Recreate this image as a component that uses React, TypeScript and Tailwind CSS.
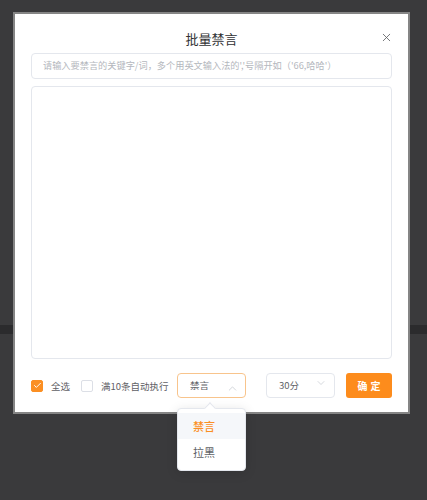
import { Check, ChevronDown, ChevronUp, X } from 'lucide-react';

const font = { fontFamily: '"Noto Sans CJK SC", "Noto Sans", sans-serif' };

function CheckBox({ checked, label }: { checked?: boolean; label: string }) {
  return (
    <label className="flex items-center gap-[8px] whitespace-nowrap text-[9.5px] leading-[14px] text-[#5f6166]">
      <span
        className={`flex size-[12px] shrink-0 items-center justify-center rounded-[2px] border ${
          checked ? 'border-[#fb8f23] bg-[#fb8f23]' : 'border-[#dcdfe6] bg-white'
        }`}
      >
        {checked && <Check className="size-[9px] text-white" strokeWidth={2.5} />}
      </span>
      {label}
    </label>
  );
}

export default function App() {
  return (
    <div className="relative h-[500px] w-[427px] overflow-hidden bg-[#3a3a3c]" style={font}>
      {/* page behind the mask */}
      <div className="h-[325px]" />
      <div className="h-[9px] bg-[#2b2b2d]" />

      {/* dialog */}
      <div className="absolute left-[13px] top-[12px] h-[402px] w-[397px] border-2 border-[#858585] bg-white px-[16px]">
        <div className="relative flex justify-center pt-[16px] pb-[5px]">
          <span className="text-[13px] leading-[18px] text-[#303133]">批量禁言</span>
          <button type="button" className="absolute right-[-1px] top-[17px] text-[#5a5c60]">
            <X className="size-[13px]" strokeWidth={1.5} />
          </button>
        </div>

        <div className="flex h-[26px] items-center whitespace-nowrap rounded-[4px] border border-[#e4e7ed] pl-[11px] text-[9.2px] text-[#b4b7bd]">
          请输入要禁言的关键字/词，多个用英文输入法的','号隔开如（'66,哈哈'）
        </div>

        <div className="mt-[7px] h-[273px] rounded-[4px] border border-[#e4e7ed]" />

        <div className="mt-[14px] flex items-center">
          <div className="w-[50px] shrink-0">
            <CheckBox checked label="全选" />
          </div>
          <div className="w-[96px] shrink-0">
            <CheckBox label="满10条自动执行" />
          </div>

          <div className="relative shrink-0">
            <div className="flex h-[25px] w-[69px] items-center justify-between whitespace-nowrap rounded-[4px] border border-[#f8c48c] pl-[12px] pr-[6px] text-[9.5px] text-[#606266]">
              <span>禁言</span>
              <ChevronUp className="mt-[6px] size-[13px] text-[#c0c4cc]" strokeWidth={1.3} />
            </div>
            <div className="absolute left-0 top-[35px] z-10 w-[69px] rounded-[4px] border border-[#e4e7ed] bg-white py-[4px] shadow-[0_2px_12px_rgba(0,0,0,0.12)]">
              <div className="absolute -top-[5px] left-[28px] size-[8px] rotate-45 border-l border-t border-[#e4e7ed] bg-white" />
              <div className="relative flex h-[26px] items-center bg-[#f5f7fa] pl-[15px] text-[11px] font-medium text-[#fb8f23]">
                禁言
              </div>
              <div className="flex h-[27px] items-center pl-[15px] text-[11px] text-[#606266]">拉黑</div>
            </div>
          </div>

          <div className="ml-[20px] flex h-[25px] w-[69px] shrink-0 items-start justify-between whitespace-nowrap rounded-[4px] border border-[#e4e7ed] pl-[12px] pr-[7px] text-[9.5px] text-[#606266]">
            <span className="self-center">30分</span>
            <ChevronDown className="mt-[3px] size-[12px] text-[#c0c4cc]" strokeWidth={1.3} />
          </div>

          <button
            type="button"
            className="ml-[11px] flex h-[25px] w-[46px] shrink-0 items-center justify-center rounded-[3px] bg-[#fd8c1c] pl-[3px] text-[10px] font-bold tracking-[3px] text-white"
          >
            确定
          </button>
        </div>
      </div>
    </div>
  );
}
